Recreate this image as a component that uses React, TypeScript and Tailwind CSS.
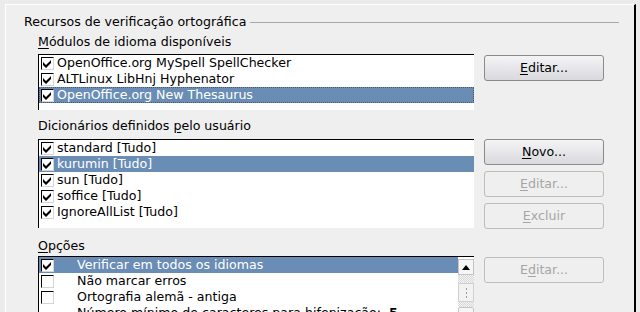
import type {FC, ReactNode} from 'react';

const font = {fontFamily: '"DejaVu Sans", Verdana, sans-serif'};

const Check: FC<{checked: boolean}> = ({checked}) => (
  <span className="flex h-[13px] w-[13px] shrink-0 items-center justify-center border-t border-l border-t-black border-l-black border-r border-b border-r-[#d6d6d6] border-b-[#d6d6d6] bg-white">
    {checked && (
      <svg width="11" height="11" viewBox="0 0 11 11">
        <path d="M1 4 L4 7 L9 2 L9 5 L4 10 L1 7 Z" fill="#000" />
      </svg>
    )}
  </span>
);

const Mn: FC<{children: ReactNode}> = ({children}) => <span className="underline underline-offset-2">{children}</span>;

type Row = {label: string; checked: boolean; selected?: boolean; focus?: boolean};

const ListRow: FC<{row: Row; indent?: boolean}> = ({row, indent}) => (
  <div
    className={`flex h-4 items-center whitespace-nowrap pl-[2px] ${
      row.selected ? 'bg-[#6a8db5] text-white' : 'text-black'
    } ${row.focus ? 'outline outline-1 -outline-offset-1 outline-dotted outline-[#4a5a6a]' : ''}`}
  >
    <Check checked={row.checked} />
    <span className={indent ? 'ml-[23px]' : 'ml-[3px]'}>{row.label}</span>
  </div>
);

const Button: FC<{children: ReactNode; disabled?: boolean}> = ({children, disabled}) => (
  <div
    className={`flex h-[26px] w-[120px] items-center justify-center rounded-[3px] border ${
      disabled
        ? 'border-[#bdbdbd] bg-[#efefef] text-[#a6a6a6]'
        : 'border-[#8a8a8a] bg-gradient-to-b from-[#f4f4f6] to-[#d9d9de] text-black'
    }`}
  >
    {children}
  </div>
);

const Label: FC<{children: ReactNode}> = ({children}) => <div className="h-4 leading-4">{children}</div>;

const box = 'w-[436px] overflow-hidden border-t border-l border-t-black border-l-black bg-white';

const modules: Row[] = [
  {label: 'OpenOffice.org MySpell SpellChecker', checked: true},
  {label: 'ALTLinux LibHnj Hyphenator', checked: true},
  {label: 'OpenOffice.org New Thesaurus', checked: true, selected: true, focus: true},
];

const dicts: Row[] = [
  {label: 'standard [Tudo]', checked: true},
  {label: 'kurumin [Tudo]', checked: true, selected: true},
  {label: 'sun [Tudo]', checked: true},
  {label: 'soffice [Tudo]', checked: true},
  {label: 'IgnoreAllList [Tudo]', checked: true},
];

const options: Row[] = [
  {label: 'Verificar em todos os idiomas', checked: true, selected: true},
  {label: 'Não marcar erros', checked: false},
  {label: 'Ortografia alemã - antiga', checked: false},
];

const App: FC = () => (
  <div className="h-[312px] w-[640px] overflow-hidden bg-[#ebebeb] text-[12.6px] text-black" style={font}>
    <div className="ml-[5px] mt-[4px] h-[320px] w-[631px] border-t border-l border-t-white border-l-white border-r-2 border-r-black bg-[#efefef]">
      <div className="mt-[9px] flex h-4 items-center pl-[18px] pr-[15px]">
        <span className="leading-4">Recursos de verificação ortográfica</span>
        <span className="ml-[4px] h-px flex-1 bg-[#a8a8a8]" />
      </div>

      <div className="pl-[32px]">
        <div className="mt-[4px]">
          <Label>
            <Mn>M</Mn>ódulos de idioma disponíveis
          </Label>
        </div>
        <div className="mt-[4px] flex gap-[10px]">
          <div className={`${box} h-[56px]`}>
            {modules.map((r) => (
              <ListRow key={r.label} row={r} />
            ))}
          </div>
          <div className="mt-px">
            <Button>
              <Mn>E</Mn>ditar...
            </Button>
          </div>
        </div>

        <div className="mt-[8px]">
          <Label>
            Dicionários definidos <Mn>p</Mn>elo usuário
          </Label>
        </div>
        <div className="mt-[5px] flex gap-[10px]">
          <div className={`${box} h-[89px]`}>
            {dicts.map((r) => (
              <ListRow key={r.label} row={r} />
            ))}
          </div>
          <div className="flex flex-col gap-[6px]">
            <Button>
              <Mn>N</Mn>ovo...
            </Button>
            <Button disabled>
              <Mn>E</Mn>ditar...
            </Button>
            <Button disabled>
              <Mn>E</Mn>xcluir
            </Button>
          </div>
        </div>

        <div className="mt-[9px]">
          <Label>
            <Mn>O</Mn>pções
          </Label>
        </div>
        <div className="mt-[2px] flex gap-[10px]">
          <div className={`${box} flex h-[80px]`}>
            <div className="flex-1">
              {options.map((r) => (
                <ListRow key={r.label} row={r} indent />
              ))}
              <div className="flex h-4 items-center whitespace-nowrap pl-[38px]">
                Número mínimo de caracteres para hifenização:&nbsp;&nbsp;<b>5</b>
              </div>
            </div>
            <div className="flex w-[16px] flex-col pt-[2px]">
              <div className="flex h-[16px] items-center justify-center border border-[#c4c4c4] bg-[#f6f6f6]">
                <svg width="8" height="5" viewBox="0 0 8 5">
                  <path d="M0 5 L4 0 L8 5 Z" fill="#000" />
                </svg>
              </div>
              <div className="h-[8px] bg-[repeating-conic-gradient(#d8d8d8_0%_25%,#f4f4f4_0%_50%)] bg-[length:2px_2px]" />
              <div className="flex h-[19px] flex-col items-center justify-center gap-[2px] border border-[#d0d0d0] bg-[#f2f2f2]">
                <span className="h-[2px] w-px bg-[#9a9a9a]" />
                <span className="h-[2px] w-px bg-[#9a9a9a]" />
                <span className="h-[2px] w-px bg-[#9a9a9a]" />
              </div>
              <div className="h-[5px] bg-[repeating-conic-gradient(#d8d8d8_0%_25%,#f4f4f4_0%_50%)] bg-[length:2px_2px]" />
              <div className="h-[16px] rounded-t-[2px] border border-[#c4c4c4] bg-[#f6f6f6]" />
            </div>
          </div>
          <div className="mt-px">
            <Button disabled>
              E<Mn>d</Mn>itar...
            </Button>
          </div>
        </div>
      </div>
    </div>
  </div>
);

export default App;
